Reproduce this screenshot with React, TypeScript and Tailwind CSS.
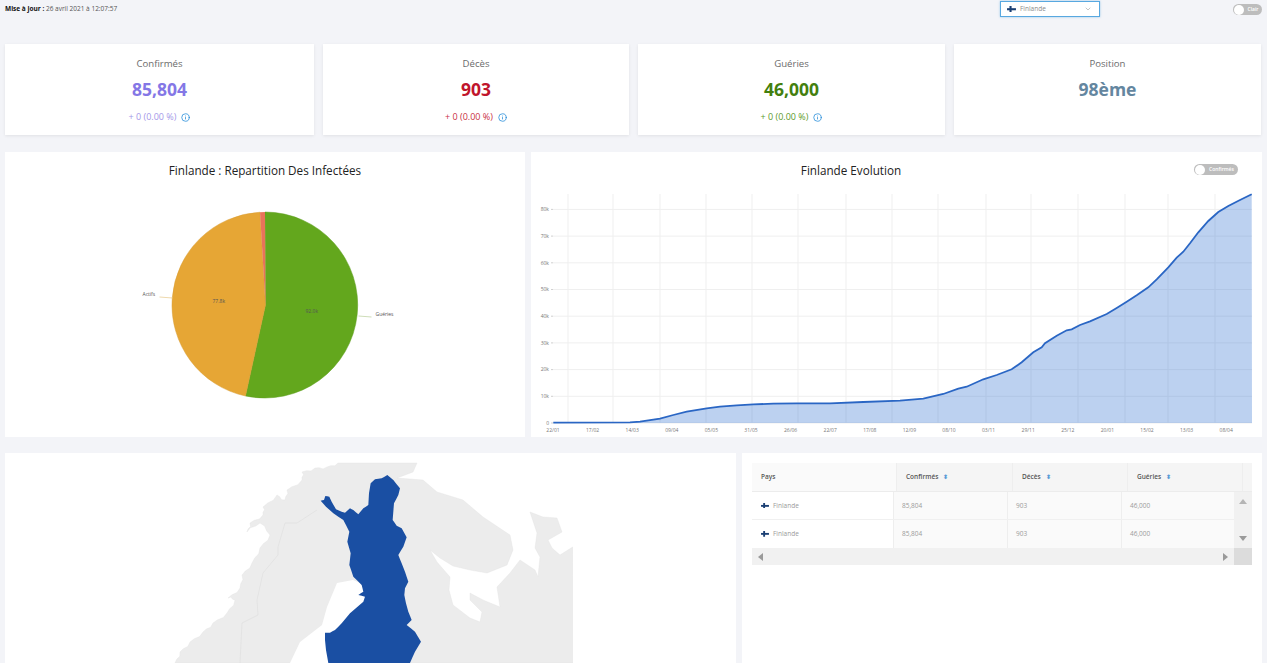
import React from 'react';
import { ChevronDown, Info } from 'lucide-react';

const FONT = "font-['Open_Sans','Noto_Sans',sans-serif]";

const curveLeft = [[70,698],[300,697],[330,695],[390,686],[430,675],[470,665],[530,655],[570,650],[620,646],[670,643],[730,641],[800,640],[900,640],[1000,636],[1110,632]];
const curveRight = [[70,626],[130,612],[175,596],[200,590],[250,568],[290,555],[335,538],[365,517],[400,487],[425,472],[435,460],[470,437],[500,421],[515,418],[540,405],[570,394],[620,372],[650,354],[680,335],[710,316],[745,292],[770,268],[805,232],[830,203],[850,185],[870,160],[895,127],[925,93],[955,66],[985,48],[1020,30],[1055,13]];
const curve = [
  ...curveLeft.map(([x, y]) => [530 + x / 3, 190 + y / 3]),
  ...curveRight.map(([x, y]) => [900 + x / 3, 190 + y / 3]),
];
const linePts = curve.map(([x, y]) => `${x.toFixed(1)},${y.toFixed(1)}`).join(' ');

const yTicks = ['0', '10k', '20k', '30k', '40k', '50k', '60k', '70k', '80k'];
const xLabels = ['22/01', '17/02', '14/03', '09/04', '05/05', '31/05', '26/06', '22/07', '17/08', '12/09', '08/10', '03/11', '29/11', '25/12', '20/01', '15/02', '13/03', '08/04'];
const vLines = [568, 613, 660, 706, 752, 798, 846, 892, 938, 986, 1031, 1078, 1125, 1168, 1215];

// adds small zigzags between the points, for coast lines
const roughen = (pts: number[][], amp: number, steps = 3) => {
  const out: number[][] = [];
  pts.forEach((p, i) => {
    out.push(p);
    const q = pts[i + 1];
    if (!q) return;
    const dx = q[0] - p[0];
    const dy = q[1] - p[1];
    const len = Math.hypot(dx, dy) || 1;
    for (let k = 1; k < steps; k++) {
      const off = amp * (((i * 5 + k * 7) % 5) - 2) / 2;
      out.push([p[0] + (dx * k) / steps - (dy / len) * off, p[1] + (dy * k) / steps + (dx / len) * off]);
    }
  });
  return out;
};
const toPoints = (pts: number[][]) => pts.map(([x, y]) => `${x.toFixed(1)},${y.toFixed(1)}`).join(' ');

const westCoast = [[175,663],[180,652],[190,642],[203,632],[213,623],[227,613],[235,600],[228,598],[240,588],[242,575],[252,563],[260,548],[270,535],[260,523],[247,532],[250,523],[263,515],[263,507],[277,495],[285,500],[287,490],[302,480],[302,472],[315,468],[327,467],[338,463]];
const northCoast = [[417,463],[413,472],[397,478],[423,480],[437,492],[463,500],[483,517],[510,535],[513,550],[507,565],[487,573],[470,570],[453,566],[440,558],[430,550],[437,562],[450,577],[449,590],[453,605],[470,618],[480,622],[482,612],[470,600],[470,593],[483,600],[500,607],[497,587],[510,573],[520,560],[535,570],[538,577],[540,557],[535,548],[537,533],[530,512],[543,517],[557,518],[562,532],[548,540],[552,548],[560,555],[572.7,547],[572.7,663]];
const landPoints = toPoints([...roughen(westCoast, 1.6), ...roughen(northCoast.slice(0, 8), 0.5, 2), ...northCoast.slice(8)]);
const gulfPoints = toPoints(roughen([[290,663],[300,642],[322,625],[327,607],[337,583],[353,580],[365,585],[395,610],[395,663]], 0.8, 2));
const finland = [[62,122],[72,120],[76,108],[88,110],[95,125],[108,148],[125,155],[135,158],[150,145],[160,150],[175,163],[190,145],[205,135],[207,100],[212,70],[225,58],[245,55],[262,45],[280,60],[300,85],[295,105],[282,130],[278,180],[290,197],[305,205],[320,232],[310,260],[295,285],[305,310],[315,335],[325,365],[315,385],[313,405],[318,430],[325,455],[335,480],[320,495],[345,515],[363,545],[345,575],[330,609],[85,609],[78,570],[75,540],[75,518],[90,518],[105,510],[125,490],[150,460],[190,425],[195,410],[175,405],[190,395],[185,375],[160,350],[148,315],[152,280],[142,245],[148,215],[130,180],[100,160],[78,140]];

const Flag = ({ w = 9 }: { w?: number }) => (
  <svg width={w} height={w * 0.72} viewBox="0 0 11 8" className="shrink-0">
    <rect x="3" width="2.6" height="8" fill="#1b3f73" />
    <rect y="2.7" width="11" height="2.6" fill="#1b3f73" />
  </svg>
);

const Toggle = ({ label, className }: { label: string; className: string }) => (
  <div className={`flex items-center rounded-full bg-[#bdbdbd] h-[11px] ${className}`}>
    <span className="w-[10px] h-[10px] rounded-full bg-white ml-[1px] shrink-0" />
    <span className="flex-1 text-center text-[5px] font-semibold text-white leading-none">{label}</span>
  </div>
);

const StatCard = ({ title, value, sub, valueColor, subColor }: { title: string; value: string; sub?: string; valueColor: string; subColor?: string }) => (
  <div className="bg-white h-[91px] shadow-[0_1px_3px_rgba(0,0,0,0.08)] flex flex-col items-center pt-[13px]">
    <div className="text-[9.6px] leading-[14px] text-[#6b6b6b]">{title}</div>
    <div className={`mt-[5px] text-[17.5px] leading-[26px] font-bold ${valueColor}`}>{value}</div>
    {sub && (
      <div className={`mt-[8px] flex items-center gap-[5px] text-[9px] leading-[14px] font-medium ${subColor}`}>
        {sub}
        <Info size={9} className="text-[#1e88d8]" />
      </div>
    )}
  </div>
);

const PieChart = () => (
  <svg width="520" height="250" viewBox="4.5 187 520 250" className="block">
    <path d="M265 305 L264.5 212 A93 93 0 1 1 245 396 Z" fill="#63a71d" stroke="#5f9e1e" strokeWidth="0.5" />
    <path d="M265 305 L245 396 A93 93 0 0 1 259.5 212.2 Z" fill="#e6a635" stroke="#d99f38" strokeWidth="0.5" />
    <path d="M265 305 L259.5 212.2 A93 93 0 0 1 264.5 212 Z" fill="#e8735a" />
    <polyline points="159,297 172,298" fill="none" stroke="#e6c98a" strokeWidth="0.7" />
    <polyline points="358,316 371,317" fill="none" stroke="#b9cf9a" strokeWidth="0.7" />
    <text x="142" y="296" fontSize="5" fill="#555">Actifs</text>
    <text x="375" y="316" fontSize="5" fill="#555">Guéries</text>
    <text x="212" y="303" fontSize="5" fill="#555">77.8k</text>
    <text x="305" y="313" fontSize="5" fill="#555">92.0k</text>
  </svg>
);

const EvolutionChart = () => (
  <svg width="731" height="250" viewBox="531 187 731 250" className="block">
    {yTicks.map((t, i) => {
      const y = 423 - i * 26.7;
      return (
        <g key={t}>
          <line x1="553" x2="1252" y1={y} y2={y} stroke="#efefef" strokeWidth="1" />
          <line x1="551" x2="553" y1={y} y2={y} stroke="#bbb" strokeWidth="0.7" />
          <text x="549" y={y + 1.8} fontSize="5" textAnchor="end" fill="#777">{t}</text>
        </g>
      );
    })}
    {vLines.map((x) => (
      <line key={x} x1={x} x2={x} y1="194" y2="423" stroke="#efefef" strokeWidth="1" />
    ))}
    <polygon points={`553,423 ${linePts} 1252,423`} fill="#2f6fd0" fillOpacity="0.32" />
    <polyline points={linePts} fill="none" stroke="#2a66c4" strokeWidth="1.8" />
    {xLabels.map((l, i) => (
      <text key={i} x={553 + i * 39.6} y="432" fontSize="5" textAnchor="middle" fill="#777">{l}</text>
    ))}
  </svg>
);

const FinlandMap = () => (
  <svg width="443" height="203" viewBox="130 460 443 203" className="block">
    <polygon fill="#ececec" stroke="#e4e4e4" strokeWidth="0.4" points={`${landPoints}`} />
    <polygon fill="#fff" points={gulfPoints} />
    <polyline fill="none" stroke="#dedede" strokeWidth="0.6" points="317,510 297,523 285,523 278,547 278,555 263,573 257,600 258,615 242,623 240,663" />
    <polygon fill="#1a4fa3" transform="translate(300 460) scale(0.3333)" points={toPoints(roughen(finland, 1.2, 2))} />
  </svg>
);

const rows = ['a', 'b'];

const CountryTable = () => (
  <div className="w-[500px] text-[6.5px] text-[#9a9a9a]">
    <div className="flex h-[29px] bg-[#f5f5f5] border-b border-[#ececec] text-[#555] font-semibold items-center">
      <div className="w-[145px] h-full flex items-center pl-[9px] bg-[#fafafa] border-r border-[#eee]">Pays</div>
      <div className="w-[116px] h-full flex items-center gap-[5px] pl-[9px] border-r border-[#eee]">Confirmés <span className="text-[#5b9bd5] text-[6px]">⬍</span></div>
      <div className="w-[115px] h-full flex items-center gap-[5px] pl-[9px] border-r border-[#eee]">Décès <span className="text-[#5b9bd5] text-[6px]">⬍</span></div>
      <div className="w-[115px] h-full flex items-center gap-[5px] pl-[9px] border-r border-[#eee]">Guéries <span className="text-[#5b9bd5] text-[6px]">⬍</span></div>
      <div className="flex-1" />
    </div>
    <div className="flex">
      <div className="w-[482px]">
        {rows.map((r) => (
          <div key={r} className="flex h-[28px] items-center border-b border-[#f0f0f0] last:border-b-0">
            <div className="w-[142px] h-full flex items-center gap-[4px] pl-[9px] bg-white border-r border-[#eee]">
              <Flag w={8} />
              Finlande
            </div>
            <div className="w-[114px] h-full flex items-center pl-[8px] bg-[#fafafa] border-r border-[#eee]">85,804</div>
            <div className="w-[114px] h-full flex items-center pl-[8px] bg-[#fafafa] border-r border-[#eee]">903</div>
            <div className="flex-1 h-full flex items-center pl-[8px] bg-[#fafafa]">46,000</div>
          </div>
        ))}
      </div>
      <div className="flex-1 bg-[#f1f1f1] flex flex-col items-center justify-between py-[7px]">
        <div className="w-0 h-0 border-x-[4px] border-x-transparent border-b-[5px] border-b-[#b5b5b5]" />
        <div className="w-0 h-0 border-x-[4px] border-x-transparent border-t-[5px] border-t-[#9a9a9a]" />
      </div>
    </div>
    <div className="flex h-[17px]">
      <div className="w-[482px] bg-[#f1f1f1] flex items-center justify-between px-[6px]">
        <div className="w-0 h-0 border-y-[4px] border-y-transparent border-r-[5px] border-r-[#9a9a9a]" />
        <div className="w-0 h-0 border-y-[4px] border-y-transparent border-l-[5px] border-l-[#9a9a9a]" />
      </div>
      <div className="flex-1 bg-[#dcdcdc]" />
    </div>
  </div>
);

const App: React.FC = () => {
  return (
    <div className={`h-screen overflow-hidden bg-[#f3f4f8] px-[5px] ${FONT}`}>
      {/* Barre du haut */}
      <div className="flex h-[44px] items-start">
        <div className="mt-[4px] text-[6.5px] leading-[10px] text-[#555] w-[995px]">
          <b className="text-[#111]">Mise à jour :</b> 26 avril 2021 à 12:07:57
        </div>
        <div className="mt-[1px] w-[100px] h-[16px] bg-white border border-[#58a8e0] flex items-center px-[6px] gap-[4px] text-[6.5px] text-[#8a8a8a] shadow-[0_0_2px_rgba(88,168,224,0.6)]">
          <Flag />
          <span className="flex-1">Finlande</span>
          <ChevronDown size={8} className="text-[#a9a9a9] mr-[1px]" />
        </div>
        <Toggle label="Clair" className="mt-[4px] ml-[133px] w-[29px]" />
      </div>

      {/* Cartes */}
      <div className="grid grid-cols-[309px_306px_307px_307px] gap-[9px]">
        <StatCard title="Confirmés" value="85,804" sub="+ 0 (0.00 %)" valueColor="text-[#8477e6]" subColor="text-[#a497e8]" />
        <StatCard title="Décès" value="903" sub="+ 0 (0.00 %)" valueColor="text-[#c0152c]" subColor="text-[#c9303f]" />
        <StatCard title="Guéries" value="46,000" sub="+ 0 (0.00 %)" valueColor="text-[#437f0e]" subColor="text-[#5c9a2b]" />
        <StatCard title="Position" value="98ème" valueColor="text-[#64869f]" />
      </div>

      {/* Graphiques */}
      <div className="flex gap-[6px] mt-[17px] h-[285px]">
        <div className="w-[520px] bg-white">
          <div className="h-[35px] pt-[3px] flex items-center justify-center text-[11.7px] text-[#222]">Finlande : Repartition Des Infectées</div>
          <PieChart />
        </div>
        <div className="w-[731px] bg-white">
          <div className="h-[35px] flex items-center">
            <div className="w-[640px] pt-[3px] text-center text-[11.7px] text-[#222]">Finlande Evolution</div>
            <Toggle label="Confirmés" className="ml-[23px] w-[44px]" />
          </div>
          <EvolutionChart />
        </div>
      </div>

      {/* Carte et tableau */}
      <div className="flex gap-[6px] mt-[16px]">
        <div className="w-[731px] h-[210px] bg-white pl-[125px] pt-[7px] overflow-hidden">
          <FinlandMap />
        </div>
        <div className="w-[520px] h-[210px] bg-white pl-[10px] pt-[10px]">
          <CountryTable />
        </div>
      </div>
    </div>
  );
};

export default App;
